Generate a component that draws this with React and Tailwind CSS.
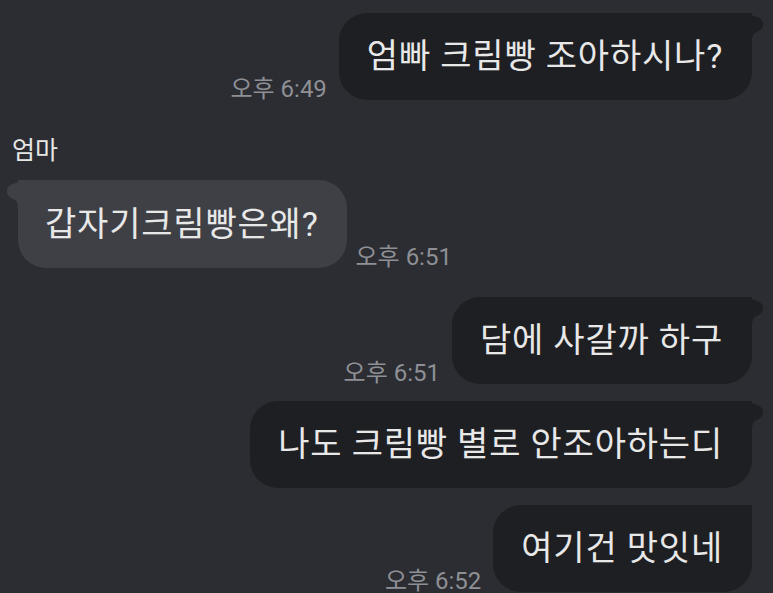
import React from "react";

const FONT = { fontFamily: "Roboto, 'Noto Sans CJK KR', sans-serif" };

function TailRight({ color }) {
  return (
    <svg className="absolute top-0 right-[-11px]" width="36" height="30" viewBox="0 0 36 30">
      <path
        d="M0 0 L18 0 C22 0 26 3 30 4 C34 5 36 8 36 12 C36 16 32 18 28 20 C26 21 25 24 25 28 L25 30 L0 30 Z"
        fill={color}
      />
    </svg>
  );
}

function TailLeft({ color }) {
  return (
    <svg className="absolute top-0 left-[-11px]" width="36" height="30" viewBox="0 0 36 30">
      <path
        d="M36 0 L18 0 C14 0 10 3 6 4 C2 5 0 8 0 12 C0 16 4 18 8 20 C10 21 11 24 11 28 L11 30 L36 30 Z"
        fill={color}
      />
    </svg>
  );
}

function Time({ children }) {
  return (
    <span className="text-[24px] leading-none text-[#8e9095] whitespace-nowrap -mb-[1px]">{children}</span>
  );
}

function Out({ text, time, tail = true }) {
  return (
    <div className="flex justify-end items-end gap-[12px]">
      {time && <Time>{time}</Time>}
      <div className="relative">
        <div className="h-[87px] flex items-center pl-[28px] pr-[29px] rounded-[28px] rounded-tr-none bg-[#1e1f23] text-[34px] tracking-[0.8px] text-[#e8e8e8] whitespace-nowrap">
          {text}
        </div>
        {tail && <TailRight color="#1e1f23" />}
      </div>
    </div>
  );
}

export default function App() {
  return (
    <div className="w-[773px] h-[593px] overflow-hidden bg-[#2b2d32]" style={FONT}>
      <div className="flex flex-col pt-[13px] pr-[21px] pl-[18px]">
        <Out text="엄빠 크림빵 조아하시나?" time="오후 6:49" />
        <div className="mt-[36px] -ml-[6px] text-[25px] leading-[30px] text-[#e6e6e6]">엄마</div>
        <div className="mt-[14px] flex items-end gap-[9px]">
          <div className="relative">
            <div className="h-[88px] flex items-center pl-[27px] pr-[28px] rounded-[28px] rounded-tl-none bg-[#3e4046] text-[34px] tracking-[0.8px] text-[#e8e8e8] whitespace-nowrap">
              갑자기크림빵은왜?
            </div>
            <TailLeft color="#3e4046" />
          </div>
          <Time>오후 6:51</Time>
        </div>
        <div className="mt-[29px]">
          <Out text="담에 사갈까 하구" time="오후 6:51" />
        </div>
        <div className="mt-[17px]">
          <Out text="나도 크림빵 별로 안조아하는디" />
        </div>
        <div className="mt-[17px]">
          <Out text="여기건 맛잇네" time="오후 6:52" tail={false} />
        </div>
      </div>
    </div>
  );
}
